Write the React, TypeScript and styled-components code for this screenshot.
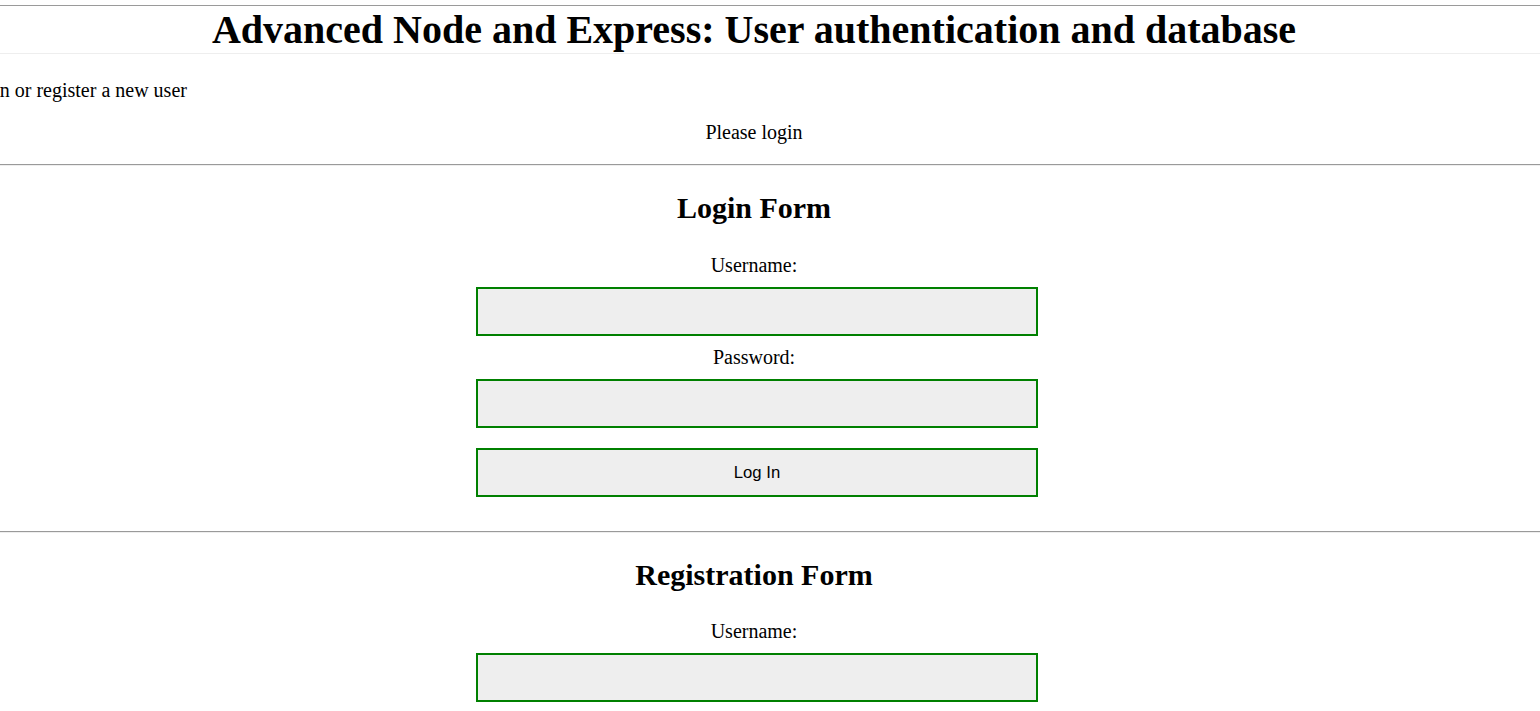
import React from "react";
import styled, { createGlobalStyle } from "styled-components";

const Global = createGlobalStyle`
  html, body { margin: 0; padding: 0; background: #fff; }
  body { font-family: "Liberation Serif", "Times New Roman", serif; color: #000; overflow-x: hidden; }
`;

const Header = styled.header`
  margin-top: 5px;
  border-top: 1px solid #9a9a9a;
  border-bottom: 1px solid #eeeeee;
  width: 100%;
`;

const Title = styled.h1`
  margin: 0;
  width: 1508px;
  height: 47px;
  font-size: 40px;
  line-height: 47px;
  font-weight: bold;
  text-align: center;
  white-space: nowrap;
`;

const Intro = styled.p`
  margin: 25px 0 0 -38px;
  font-size: 20px;
  line-height: 23px;
  white-space: nowrap;
`;

const Status = styled.p`
  margin: 19px 0 0;
  width: 1508px;
  font-size: 20px;
  line-height: 23px;
  text-align: center;
`;

const Rule = styled.hr<{ $top: number }>`
  margin: 0;
  margin-top: ${(p) => p.$top}px;
  border: 0;
  border-top: 1px solid #9a9a9a;
  border-bottom: 1px solid #eeeeee;
  height: 0;
`;

const Form = styled.form`
  width: 1508px;
  display: flex;
  flex-direction: column;
  align-items: center;
`;

const FormTitle = styled.h2<{ $after: number }>`
  margin: 24px 0 ${(p) => p.$after}px;
  font-size: 30px;
  line-height: 35px;
  font-weight: bold;
`;

const Label = styled.label`
  display: block;
  margin: 10px 0 10px;
  font-size: 20px;
  line-height: 23px;
`;

const Input = styled.input`
  box-sizing: border-box;
  width: 562px;
  height: 49px;
  margin-left: 6px;
  border: 2px solid #008000;
  background: #eeeeee;
  outline: none;
  padding: 0 8px;
  font-size: 17px;
`;

const Button = styled.button`
  box-sizing: border-box;
  width: 562px;
  height: 49px;
  margin: 20px 0 0 6px;
  border: 2px solid #008000;
  background: #eeeeee;
  font-family: "Liberation Sans", Arial, sans-serif;
  font-size: 16.7px;
  color: #000;
  cursor: pointer;
`;

export default function App() {
  return (
    <>
      <Global />
      <Header>
        <Title>Advanced Node and Express: User authentication and database</Title>
      </Header>
      <Intro>Login or register a new user</Intro>
      <Status>Please login</Status>
      <Rule $top={20} />
      <Form onSubmit={(e) => e.preventDefault()}>
        <FormTitle $after={19}>Login Form</FormTitle>
        <Label htmlFor="lu">Username:</Label>
        <Input id="lu" type="text" name="username" />
        <Label htmlFor="lp">Password:</Label>
        <Input id="lp" type="password" name="password" />
        <Button type="submit">Log In</Button>
      </Form>
      <Rule $top={34} />
      <Form onSubmit={(e) => e.preventDefault()}>
        <FormTitle $after={18}>Registration Form</FormTitle>
        <Label htmlFor="ru">Username:</Label>
        <Input id="ru" type="text" name="username" />
        <Label htmlFor="rp">Password:</Label>
        <Input id="rp" type="password" name="password" />
        <Button type="submit">Register</Button>
      </Form>
    </>
  );
}
